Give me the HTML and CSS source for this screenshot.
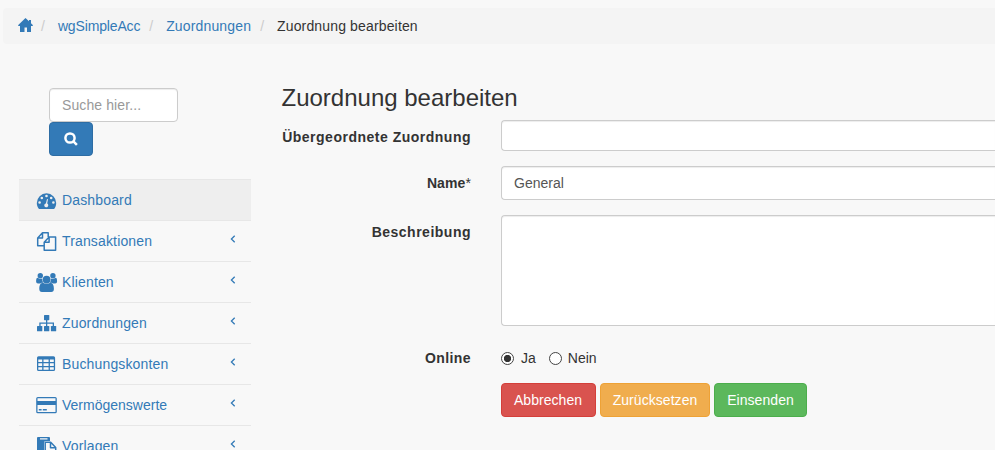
FILE: index.html
```html
<!DOCTYPE html>
<html lang="de">
<head>
<meta charset="utf-8">
<title>Zuordnung bearbeiten</title>
<link rel="stylesheet" href="styles.css">
</head>
<body>
<ol class="breadcrumb">
  <li><a href="#"><svg class="home" viewBox="0 0 16 14"><path d="M7.500 0 11 3.300V2H13V5.200L15 7.200 14.500 8H13V14H9V9.500H6.500V14H2V8H.5L0 7.200Z"/></svg></a></li>
  <li><a class="tight" href="#">wgSimpleAcc</a></li>
  <li><a href="#">Zuordnungen</a></li>
  <li>Zuordnung bearbeiten</li>
</ol>
<div class="page">
  <aside class="sidebar">
    <form class="search">
      <input class="control" type="text" placeholder="Suche hier...">
      <button class="btn primary" type="button" aria-label="Suche"><svg class="magnifier" viewBox="0 0 14 14"><circle cx="6" cy="6" r="4.6"/><path d="m9.4 9.4 3.5 3.5"/></svg></button>
    </form>
    <ul class="menu">
      <li class="active"><a href="#"><svg class="icon" viewBox="0 0 22 20"><path fill-rule="evenodd" d="M3 18C1.600 16.300 .8 14.200 .8 12A9.700 9.700 0 0 1 20.200 12C20.200 14.200 19.500 16.300 18.100 18ZM4.900 11.500a1.300 1.300 0 1 0-2.600 0 1.300 1.300 0 0 0 2.600 0ZM7.100 7a1.300 1.300 0 1 0-2.600 0 1.300 1.300 0 0 0 2.600 0ZM11.800 5a1.300 1.300 0 1 0-2.600 0 1.300 1.300 0 0 0 2.600 0ZM16.500 7a1.300 1.300 0 1 0-2.600 0 1.300 1.300 0 0 0 2.600 0ZM18.700 11.500a1.300 1.300 0 1 0-2.600 0 1.300 1.300 0 0 0 2.600 0ZM12 8.200 11.200 12.600A2 2 0 1 1 9.900 12.400L11 8Z"/></svg>Dashboard</a></li>
      <li><a href="#"><svg class="icon outline" viewBox="0 0 22 20"><path d="M8.200 13.800H1.700V6L6.500.8H12.200V5M6.500.8V6H1.700M8.200 18.300V10.200L13.100 5H19.600V18.300ZM13.100 5V10.200H8.200"/></svg>Transaktionen<svg class="arrow" viewBox="0 0 6 8"><path d="M4.700.7 1.400 4 4.700 7.300"/></svg></a></li>
      <li><a href="#"><svg class="icon" viewBox="0 0 22 20"><circle cx="4.300" cy="2.800" r="2.700"/><circle cx="16.900" cy="2.800" r="2.700"/><path d="M2.500 5.200Q4.500 6.500 6.200 5.600 6 8.200 7.500 9.700H6Q4.900 9.700 4.300 10.500H2Q.1 10.500.1 8.500.1 5 1.500 4.800ZM18.700 5.200Q16.700 6.500 15 5.600 15.200 8.200 13.700 9.700H15.200Q16.300 9.700 16.900 10.500H19.200Q21.100 10.500 21.100 8.500 21.100 5 19.700 4.800Z"/><circle cx="10.600" cy="6.600" r="3.900"/><path d="M6.800 9.700Q10.600 11.600 14.400 9.700C17.200 10 17.900 13 17.900 16Q17.900 19 15.200 19H6Q3.300 19 3.300 16C3.300 13 4 10 6.800 9.700Z"/></svg>Klienten<svg class="arrow" viewBox="0 0 6 8"><path d="M4.700.7 1.400 4 4.700 7.300"/></svg></a></li>
      <li><a href="#"><svg class="icon" viewBox="0 0 22 20"><rect x="8" y="1" width="5.300" height="5.200" rx=".6"/><path d="M10 5.500h1.300V8.500H18V12.500H16.700V9.800H11.300V12.500H10V9.800H4.600V12.500H3.300V8.500H10Z"/><rect x="1" y="12" width="5.300" height="5.300" rx=".6"/><rect x="8" y="12" width="5.300" height="5.300" rx=".6"/><rect x="14.900" y="12" width="5.300" height="5.300" rx=".6"/></svg>Zuordnungen<svg class="arrow" viewBox="0 0 6 8"><path d="M4.700.7 1.400 4 4.700 7.300"/></svg></a></li>
      <li><a href="#"><svg class="icon" viewBox="0 0 22 20"><path fill-rule="evenodd" d="M2.600 1.200H17.500Q19.100 1.200 19.100 2.800V14.400Q19.100 16 17.500 16H2.600Q1 16 1 14.400V2.800Q1 1.200 2.600 1.200ZM2.300 4.500V7H6.200V4.500ZM7.500 4.500V7H12.600V4.500ZM13.900 4.500V7H17.800V4.500ZM2.300 8.300V10.900H6.200V8.300ZM7.500 8.300V10.900H12.600V8.300ZM13.900 8.300V10.900H17.800V8.300ZM2.300 12.200V14.700H6.200V12.200ZM7.500 12.200V14.700H12.600V12.200ZM13.900 12.200V14.700H17.800V12.200Z"/></svg>Buchungskonten<svg class="arrow" viewBox="0 0 6 8"><path d="M4.700.7 1.400 4 4.700 7.300"/></svg></a></li>
      <li><a class="plain" href="#"><svg class="icon" viewBox="0 0 22 20"><path fill-rule="evenodd" d="M1.800 1H19.200Q20.800 1 20.800 2.600V15.700Q20.800 17.300 19.200 17.300H1.800Q.2 17.300.2 15.700V2.600Q.2 1 1.800 1ZM1.500 2.300V5H19.500V2.300ZM1.500 9V16H19.500V9ZM2.800 13H5.600V14.500H2.800ZM6.800 13H10.800V14.500H6.800Z"/></svg>Vermögenswerte<svg class="arrow" viewBox="0 0 6 8"><path d="M4.700.7 1.400 4 4.700 7.300"/></svg></a></li>
      <li><a href="#"><svg class="icon" viewBox="0 0 22 20"><path fill-rule="evenodd" d="M1 1Q1 0 2 0H13Q14 0 14 1V4H9.500Q8 4 8 5.500V17H2Q1 17 1 16ZM4 1.200V2.400H11.500V1.200Z"/><path class="sheet" d="M9.200 18.400V5.200H14.700L19.700 10.500V18.400ZM14.500 5.200V10.700H19.700"/></svg>Vorlagen<svg class="arrow" viewBox="0 0 6 8"><path d="M4.700.7 1.400 4 4.700 7.300"/></svg></a></li>
    </ul>
  </aside>
  <main class="content">
    <h3>Zuordnung bearbeiten</h3>
    <form>
      <div class="row parent"><label>Übergeordnete Zuordnung</label><div class="control select"></div></div>
      <div class="row name"><label>Name<span class="req">*</span></label><input class="control" type="text" value="General"></div>
      <div class="row description"><label>Beschreibung</label><textarea class="control"></textarea></div>
      <div class="row online"><label>Online</label><div class="choices"><span class="radio on"></span><span class="choice">Ja</span><span class="radio"></span><span class="choice">Nein</span></div></div>
      <div class="actions"><button class="btn danger" type="button">Abbrechen</button><button class="btn warning" type="button">Zurücksetzen</button><button class="btn success" type="button">Einsenden</button></div>
    </form>
  </main>
</div>
</body>
</html>
```
FILE: styles.css
```css
* { box-sizing: border-box; }
html { overflow: hidden; }
body {
  margin: 0;
  height: 450px;
  overflow: hidden;
  padding: 8px 0 0 3px;
  background: #f8f8f8;
  color: #333;
  font: 14px/20px "Liberation Sans", Arial, sans-serif;
}
a { color: #337ab7; text-decoration: none; }
ul, ol { list-style: none; margin: 0; padding: 0; }
svg { display: block; fill: currentColor; }

.breadcrumb {
  display: flex;
  height: 36px;
  padding: 8px 15px;
  background: #f4f4f4;
  border-radius: 4px 0 0 4px;
  letter-spacing: .15px;
}
.breadcrumb li + li::before { content: "/"; padding: 0 13px 0 9px; color: #ccc; letter-spacing: 0; }
.breadcrumb li:nth-child(2)::before { padding-left: 7px; }
.tight { letter-spacing: -.15px; }
.home { width: 16px; height: 14px; margin-top: 2px; }

.page { display: flex; }
.sidebar { width: 232px; margin-left: 16px; flex: none; }
.search { padding: 44px 0 0 30px; height: 135px; }
.search .control { width: 129px; letter-spacing: .1px; }

.control {
  display: block;
  height: 34px;
  padding: 6px 12px;
  border: 1px solid #ccc;
  border-radius: 4px;
  background: #fff;
  box-shadow: inset 0 1px 1px rgba(0, 0, 0, .075);
  color: #555;
  font: inherit;
}
.control::placeholder { color: #999; opacity: 1; }
.btn {
  height: 34px;
  padding: 6px 12px;
  border: 1px solid;
  border-radius: 4px;
  color: #fff;
  font: inherit;
}
.primary { display: block; width: 44px; padding: 0 14px; background: #337ab7; border-color: #2e6da4; }
.magnifier { width: 14px; height: 14px; fill: none; stroke: #fff; stroke-width: 2.500; }

.menu li { height: 41px; border-top: 1px solid #e7e7e7; }
.menu .active { background: #eee; }
.menu a { display: flex; height: 40px; padding: 0 15px 0 17px; align-items: flex-start; line-height: 40px; letter-spacing: .15px; }
.menu .plain { letter-spacing: 0; }
.icon { width: 22px; height: 20px; margin: 11px 4px 0 0; flex: none; }
.outline, .sheet { fill: none; stroke: currentColor; stroke-width: 1.500; stroke-linejoin: round; }
.sheet { fill: #f8f8f8; }
.arrow { width: 6px; height: 8px; margin: 14px 0 0 auto; flex: none; fill: none; stroke: #337ab7; stroke-width: 1.300; }

.content { flex: 1; min-width: 0; margin-left: 31px; padding-top: 41px; }
h3 { margin: 0 0 9px -.5px; font-size: 24px; font-weight: 500; line-height: 26px; }
.row { display: flex; margin-bottom: 15px; }
.row label { width: 189px; margin-right: 30px; padding-top: 7px; flex: none; text-align: right; font-weight: 700; white-space: nowrap; letter-spacing: .5px; }
.name label { letter-spacing: .1px; }
.row .control { flex: 1; min-width: 0; border-right: 0; border-radius: 4px 0 0 4px; }
.row .select { height: 31px; }
.req { font-weight: 400; }
.description .control { height: 111px; resize: none; }
.online { height: 27px; }
.online label { letter-spacing: .4px; }
.choices { display: flex; align-items: center; padding-top: 7px; height: 27px; }
.radio { width: 13px; height: 13px; border: 1px solid #444; border-radius: 50%; background: #fff; }
.on { background: radial-gradient(circle, #333 3.300px, #fff 4px); }
.choice { margin: 0 13px 0 7px; }
.choice:last-child { margin-left: 6px; }
.actions { display: flex; gap: 4px; padding-left: 219px; }
.actions .btn { padding: 0; letter-spacing: .05px; }
.actions .danger { padding-right: 1px; }
.danger { width: 95px; background: #d9534f; border-color: #d43f3a; }
.warning { width: 110px; background: #f0ad4e; border-color: #eea236; }
.success { width: 93px; background: #5cb85c; border-color: #4cae4c; }
```
